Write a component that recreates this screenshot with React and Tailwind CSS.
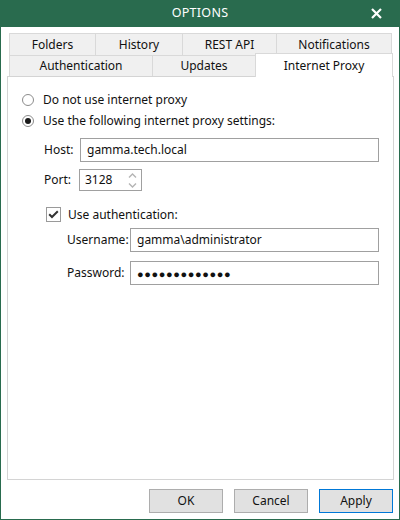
import React from "react";

const font = { fontFamily: '"Noto Sans", "Open Sans", sans-serif' };

function Tab({ label, w, last }) {
  return (
    <div
      className={`h-full bg-[#f0f0f0] border-t border-l border-[#d9d9d9] flex items-center justify-center ${last ? "border-r" : ""}`}
      style={{ width: w }}
    >
      {label}
    </div>
  );
}

function Radio({ checked, label }) {
  return (
    <div className="h-[21px] flex items-center">
      <span className="w-[12px] h-[12px] rounded-full border border-[#8c8c8c] bg-white flex items-center justify-center">
        {checked && <span className="w-[6px] h-[6px] rounded-full bg-[#1a1a1a]" />}
      </span>
      <span className="ml-[9px]">{label}</span>
    </div>
  );
}

function Field({ value, className = "" }) {
  return (
    <div className={`border border-[#a0a0a0] bg-white flex items-center pl-[6px] ${className}`}>
      {value}
    </div>
  );
}

function Button({ label, primary }) {
  return (
    <button
      className={`w-[74px] h-[24px] bg-[#e1e1e1] border flex items-center justify-center ${primary ? "border-[#0078d7]" : "border-[#adadad]"}`}
    >
      {label}
    </button>
  );
}

export default function App() {
  return (
    <div
      className="w-[400px] h-[520px] bg-white border-x border-b border-[#296b4e] flex flex-col text-[12px] text-[#111] leading-none"
      style={font}
    >
      {/* Title bar */}
      <div className="h-[27px] shrink-0 bg-[#296b4e] text-white flex items-center relative -mx-px">
        <div className="flex-1 text-center text-[12.5px] tracking-[0.3px]">OPTIONS</div>
        <svg className="absolute right-[18px] top-[8px]" width="11" height="11" viewBox="0 0 11 11">
          <path d="M1 1L10 10M10 1L1 10" stroke="white" strokeWidth="2.2" />
        </svg>
      </div>

      {/* Tabs */}
      <div className="mt-[6px] pl-[8px] flex flex-col">
        <div className="h-[22px] flex">
          <Tab label="Folders" w={86} />
          <Tab label="History" w={87} />
          <Tab label="REST API" w={94} />
          <Tab label="Notifications" w={116} last />
        </div>
        <div className="h-[21px] flex items-start">
          <Tab label="Authentication" w={143} />
          <Tab label="Updates" w={103} />
          <div className="relative z-10 -mt-[2px] h-[24px] w-[138px] bg-white border-t border-x border-[#d9d9d9] flex items-start pt-[6px] justify-center">
            Internet Proxy
          </div>
        </div>
      </div>

      {/* Panel */}
      <div className="ml-[6px] w-[387px] h-[404px] shrink-0 border border-[#d4d4d4] bg-white pt-[12px] pl-[14px] pr-[14px]">
        <Radio label="Do not use internet proxy" />
        <Radio checked label="Use the following internet proxy settings:" />

        <div className="pl-[22px]">
          <div className="mt-[7px] flex items-center">
            <span className="w-[36px]">Host:</span>
            <Field value="gamma.tech.local" className="flex-1 h-[24px]" />
          </div>
          <div className="mt-[7px] flex items-center">
            <span className="w-[35px]">Port:</span>
            <div className="w-[63px] h-[22px] border border-[#a0a0a0] bg-white flex items-center pl-[5px]">
              <span className="flex-1">3128</span>
              <div className="w-[18px] h-full flex flex-col items-center justify-center gap-[5px]">
                <svg width="9" height="5" viewBox="0 0 9 5">
                  <path d="M1 4.5L4.5 1L8 4.5" fill="none" stroke="#b4b4b4" strokeWidth="1.4" />
                </svg>
                <svg width="9" height="5" viewBox="0 0 9 5">
                  <path d="M1 0.5L4.5 4L8 0.5" fill="none" stroke="#b4b4b4" strokeWidth="1.4" />
                </svg>
              </div>
            </div>
          </div>

          <div className="mt-[16px] h-[15px] flex items-center pl-[2px]">
            <span className="w-[15px] h-[15px] border border-[#9a9a9a] bg-white flex items-center justify-center">
              <svg width="11" height="9" viewBox="0 0 11 9">
                <path d="M1.2 4.2L4 7L9.8 1.2" fill="none" stroke="#333" strokeWidth="2" />
              </svg>
            </span>
            <span className="ml-[7px]">Use authentication:</span>
          </div>

          <div className="pl-[23px]">
            <div className="mt-[6px] flex items-center">
              <span className="w-[63px]">Username:</span>
              <Field value="gamma\administrator" className="flex-1 h-[24px]" />
            </div>
            <div className="mt-[9px] flex items-center">
              <span className="w-[63px]">Password:</span>
              <Field
                value={<span className="text-[11px] tracking-[0.6px]">●●●●●●●●●●●●●</span>}
                className="flex-1 h-[24px]"
              />
            </div>
          </div>
        </div>
      </div>

      {/* Buttons */}
      <div className="mt-[9px] flex justify-end gap-[11px] pr-[6px]">
        <Button label="OK" />
        <Button label="Cancel" />
        <Button label="Apply" primary />
      </div>
    </div>
  );
}
